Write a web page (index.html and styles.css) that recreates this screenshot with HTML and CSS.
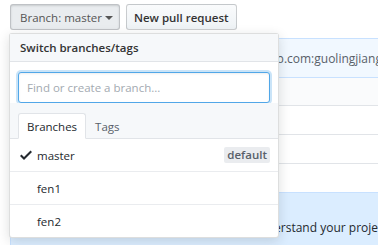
FILE: index.html
```html
<!DOCTYPE html>
<html lang="en">
<head>
  <meta charset="UTF-8">
  <title>Branch select</title>
  <link rel="stylesheet" href="styles.css">
</head>
<body>
  <div class="toolbar">
    <button class="btn selected">Branch: master <span class="caret"></span></button>
    <button class="btn">New pull request</button>
  </div>

  <div class="page">
    <!-- repo box behind the menu -->
    <div class="setup">
      <div class="setup-head">
        <span class="clone-url">github.com:guolingjiang</span>
      </div>
      <div class="setup-row grey"></div>
      <div class="setup-row"></div>
      <div class="setup-row"></div>
      <div class="setup-row last"></div>
      <div class="setup-note">understand your project.</div>
    </div>

    <!-- Branch dropdown -->
    <div class="menu">
      <div class="menu-header">Switch branches/tags</div>
      <div class="menu-filter">
        <input type="text" class="filter-input" placeholder="Find or create a branch..." autofocus>
      </div>
      <div class="menu-tabs">
        <span class="tab active">Branches</span>
        <span class="tab">Tags</span>
      </div>
      <div class="menu-list">
        <div class="menu-item">
          <svg class="check" width="12" height="16" viewBox="0 0 12 16"><path fill="#24292e" fill-rule="evenodd" d="M12 5l-8 8-4-4 1.5-1.5L4 10l6.5-6.5L12 5z"/></svg>
          <span class="name">master</span>
          <span class="label">default</span>
        </div>
        <div class="menu-item">
          <span class="name">fen1</span>
        </div>
        <div class="menu-item">
          <span class="name">fen2</span>
        </div>
      </div>
    </div>
  </div>
</body>
</html>
```

FILE: styles.css
```css
body {
  margin: 0;
  font-family: 'Open Sans', 'Noto Sans', Arial, sans-serif;
  font-size: 11.5px;
  color: #24292e;
  background-color: #fff;
  overflow: hidden;
}

.toolbar {
  display: flex;
  gap: 6px;
  padding: 4px 0 0 10px;
}

.btn {
  height: 26px;
  padding: 0 7px;
  font-family: inherit;
  font-size: 11.5px;
  font-weight: 600;
  color: #333;
  background-image: linear-gradient(-180deg, #fafbfc 0%, #eff3f6 90%);
  border: 1px solid rgba(27, 31, 35, 0.2);
  border-radius: 3px;
}

.btn.selected {
  padding: 0 6px 0 9px;
  font-weight: 400;
  color: #555;
  background: #e9ecef;
  box-shadow: inset 0 1px 2px rgba(27, 31, 35, 0.15);
}

.caret {
  display: inline-block;
  width: 0;
  height: 0;
  vertical-align: middle;
  border-top: 4px solid #555;
  border-left: 4px solid transparent;
  border-right: 4px solid transparent;
}

.page {
  position: relative;
  padding-top: 8px;
}

/* box behind the menu */
.setup {
  margin-left: 10px;
  border: 1px solid #c8e1ff;
  border-right: none;
  border-bottom: none;
}

.setup-head {
  height: 38px;
  display: flex;
  align-items: center;
  padding-left: 237px;
  background-color: #f1f8ff;
  border-bottom: 1px solid #c8e1ff;
}

.clone-url {
  font-size: 12px;
  color: #586069;
  white-space: nowrap;
}

.setup-row {
  height: 28px;
  border-bottom: 1px solid #e1e4e8;
}

.setup-row.grey {
  height: 27px;
  background-color: #fafbfc;
}

.setup-row.last {
  border-bottom: none;
}

.setup-note {
  height: 60px;
  padding: 26px 0 0 241px;
  box-sizing: border-box;
  font-size: 12px;
  white-space: nowrap;
  background-color: #dbedff;
  border-top: 1px solid #c8e1ff;
}

/* dropdown */
.menu {
  position: absolute;
  top: 3px;
  left: 9px;
  width: 268px;
  background-color: #fff;
  border: 1px solid rgba(27, 31, 35, 0.15);
  border-radius: 3px;
  box-shadow: 0 3px 12px rgba(27, 31, 35, 0.15);
}

.menu-header {
  height: 27px;
  display: flex;
  align-items: center;
  padding: 0 10px;
  font-weight: 600;
  color: #333;
  background-color: #f6f8fa;
  border-bottom: 1px solid #e1e4e8;
}

.menu-filter {
  padding: 10px 8px 0;
}

.filter-input {
  display: block;
  width: 100%;
  height: 31px;
  box-sizing: border-box;
  padding: 0 8px;
  font-family: inherit;
  font-size: 11.5px;
  color: #24292e;
  border: 1px solid #51a7e8;
  border-radius: 3px;
  outline: none;
  box-shadow: inset 0 1px 2px rgba(27, 31, 35, 0.075), 0 0 0 2px rgba(81, 167, 232, 0.3);
}

.filter-input::placeholder {
  color: #a3aab1;
}

.menu-tabs {
  display: flex;
  padding: 10px 8px 0;
  background-color: #f6f8fa;
  border-bottom: 1px solid #e1e4e8;
}

.tab {
  height: 24px;
  display: flex;
  align-items: center;
  padding: 0 8px;
  margin-bottom: -1px;
  color: #586069;
  border: 1px solid transparent;
  border-radius: 3px 3px 0 0;
}

.tab.active {
  color: #24292e;
  background-color: #fff;
  border-color: #e1e4e8;
  border-bottom-color: #fff;
}

.menu-item {
  height: 32px;
  display: flex;
  align-items: center;
  padding: 0 8px 0 27px;
  position: relative;
  border-bottom: 1px solid #eaecef;
}

.menu-item:last-child {
  border-bottom: none;
}

.check {
  position: absolute;
  left: 10px;
  top: 8px;
}

.name {
  flex: 1;
  color: #24292e;
}

.label {
  padding: 0 3px;
  font-weight: 600;
  color: #586069;
  background-color: #eaecef;
  border-radius: 2px;
  line-height: 16px;
}
```
